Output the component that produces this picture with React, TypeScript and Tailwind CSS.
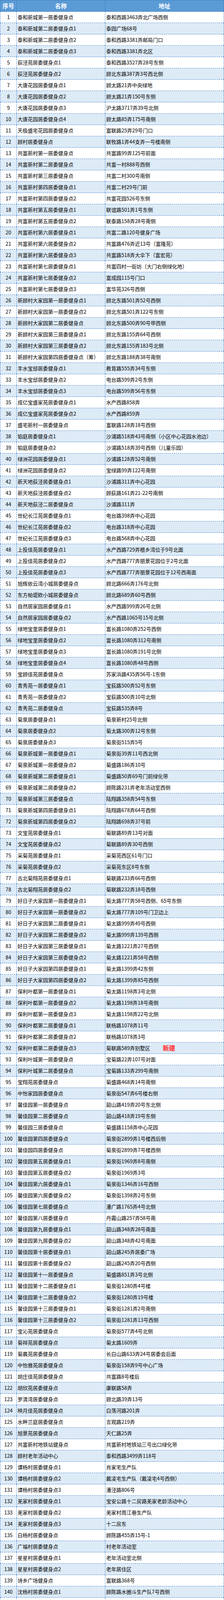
import React from "react";

type Row = [string, string, string];

const raw = `1|泰和新城第一居委健身点|泰和西路3463弄北广场西侧
2|泰和新城第二居委健身点1|泰园广场68号
3|泰和新城第二居委健身点2|泰和西路3381弄邮局门口
4|泰和新城第二居委健身点3|泰和西路3381弄北区
5|荻泾苑居委健身点1|泰和西路3527弄28号东侧
6|荻泾苑居委健身点2|顾北东路387弄3号西北侧
7|大唐花园居委健身点1|顾太路21弄中央绿地
8|大唐花园居委健身点2|顾太路21弄150号东侧
9|大唐花园居委健身点3|沪太路3717弄39号北侧
10|大唐花园居委健身点4|顾太路85弄175号南侧
11|天极盛宅花园居委健身点|富联路25弄29号门口
12|顾村居委健身点|联牧路1弄44支弄一号楼南侧
13|共富新村第一居委健身点|共富路99弄125号前面
14|共富新村第二居委健身点|共富一村888号西侧
15|共富新村第三居委健身点|共富二村300号南侧
16|共富新村第四居委健身点1|共富二村29号门前
17|共富新村第四居委健身点2|共富花园526号东侧
18|共富新村第五居委健身点1|联谊路501弄1号东侧
19|共富新村第五居委健身点2|联泰路158弄28号南侧
20|共富新村第六居委健身点1|共富二路120号健身广场
21|共富新村第六居委健身点2|共富路476弄近13号（富隆苑）
22|共富新村第六居委健身点3|共富路518弄大伞下（富宏苑）
23|共富新村第七居委健身点1|共富四村一街坊（大门右侧绿化地）
24|共富新村第七居委健身点2|富成园115号门口
25|共富新村第七居委健身点3|富华苑326号西侧
26|新顾村大家园第一居委健身点1|顾北东路501弄52号西侧
27|新顾村大家园第一居委健身点2|顾北东路501弄122号东侧
28|新顾村大家园第二居委健身点|顾北东路500弄90号甲西侧
29|新顾村大家园第三居委健身点1|顾北东路155弄64号西侧
30|新顾村大家园第三居委健身点2|顾北东路155弄183号北侧
31|新顾村大家园第四居委健身点（筹）|顾北东路188弄38号南侧
32|丰水宝邸居委健身点1|教育路555弄34号东侧
33|丰水宝邸居委健身点2|电台路599弄2号东侧
34|丰水宝邸居委健身点3|电台路599弄56号东侧
35|成亿宝盛家苑居委健身点1|水产西路858弄
36|成亿宝盛家苑居委健身点2|水产西路859弄
37|盛宅新村一居委健身点|富联路128弄18号西侧
38|铂庭居委健身点1|沙浦路518弄43号南侧（小区中心花园水池边）
39|铂庭居委健身点2|沙浦路518弄39号西侧（儿童乐园）
40|绿洲花园居委健身点1|沙浦路128弄52号南侧
41|绿洲花园居委健身点2|宝绿路99弄122号南侧
42|新天地荻泾居委健身点1|沙浦路311弄中心花园
43|新天地荻泾居委健身点2|顾荻路161弄21-22号南侧
44|新天地荻泾二居委健身点|沙浦路311弄
45|世纪长江苑居委健身点1|电台路398弄中心花园
46|世纪长江苑居委健身点2|电台路318弄中心花园
47|世纪长江苑居委健身点3|电台路568弄中心花园
48|上投佳苑居委健身点1|水产西路729弄檀乡湾位于9号北面
49|上投佳苑居委健身点2|水产西路777弄丽景花园位于2号北面
50|上投佳苑居委健身点3|水产西路777弄丽景花园位于12号西南面
51|旭辉依云湾小城居委健身点|顾北路666弄176号北侧
52|东方帕堤欧小城居委健身点|顾北路689弄60号西侧
53|自然居家园居委健身点1|水产西路999弄26号北侧
54|自然居家园居委健身点2|水产西路1065号15号北侧
55|绿地宝里居委健身点1|富长路1080弄252号西侧
56|绿地宝里居委健身点2|富长路1080弄312号南侧
57|绿地宝里居委健身点3|富长路1080弄191号北侧
58|绿地宝里居委健身点4|富长路1080弄48号西侧
59|宝顾佳苑居委健身点|苏家浜路435弄56号-1东侧
60|青秀苑一居委健身点1|宝荻路500弄52号东侧
61|青秀苑一居委健身点2|宝荻路500弄10号北侧
62|青秀苑二居委健身点|宝荻路535弄8号
63|菊泉居委健身点1|菊泉新村25号北侧
64|菊泉居委健身点2|菊太路300弄12号东侧
65|菊泉居委健身点3|菊泉街515弄5号
66|菊泉新城第一居委健身点1|菊泉街39弄11号西北侧
67|菊泉新城第一居委健身点2|菊盛路186弄10号
68|菊泉新城第二居委健身点1|菊盛路50弄69号门前绿化带
69|菊泉新城第二居委健身点2|顾陈路231弄老年活动室西侧
70|菊泉新城第三居委健身点|陆翔路358弄54号东侧
71|菊泉新城第四居委健身点1|陆翔路678弄64号西侧
72|菊泉新城第四居委健身点2|陆翔路698弄37号前
73|文宝苑居委健身点1|菊联路89弄13号对面
74|文宝苑居委健身点2|菊联路89弄30号西侧
75|采菊苑居委健身点1|采菊苑西区61号门口
76|采菊苑居委健身点2|采菊苑东区8号东侧
77|古北菊翔苑居委健身点1|菊联路233弄66号西侧
78|古北菊翔苑居委健身点2|菊联路232弄18号西侧
79|好日子大家园第一居委健身点1|菊太路777弄58号西侧、65号东侧
80|好日子大家园第一居委健身点2|菊太路777弄109号门卫边上
81|好日子大家园第二居委健身点1|菊太路999弄49号西侧
82|好日子大家园第二居委健身点2|菊太路999弄139号西侧
83|好日子大家园第三居委健身点1|菊太路1221弄27号西侧
84|好日子大家园第三居委健身点2|菊太路1221弄58号西侧
85|好日子大家园第四居委健身点1|菊太路1399弄42东侧
86|好日子大家园第四居委健身点2|菊太路1399弄85号西侧
87|保利叶都第一居委健身点1|菊太路1198弄3号北侧
88|保利叶都第一居委健身点2|菊太路1198弄18号南侧
89|保利叶都第一居委健身点3|菊太路1198弄22号北侧
90|保利叶都第二居委健身点1|联杨路1078弄11号
91|保利叶都第二居委健身点2|联杨路1078弄3号
92|保利叶都第二居委健身点3|菊联路589弄别墅区
93|保利叶城第一居委健身点|宝菊路22弄107号对面
94|保利叶城第二居委健身点|宝菊路133弄299号南侧
95|宝翔苑居委健身点|菊盛路468弄14号南侧
96|中怡家园居委健身点|菊泉街547弄6号楼右侧
97|馨佳园第一居委健身点|韶山路419弄20号东北侧
98|馨佳园第二居委健身点|韶山路418弄19号东侧
99|馨佳园三居委健身点|菊盛路1158弄中心花园
100|馨佳园第四居委健身点|菊泉街2899弄1号楼西后侧
101|馨佳园四居委健身点|菊泉街2899弄7号楼西侧
102|馨佳园第五居委健身点1|菊泉街1969弄8号南侧
103|馨佳园第五居委健身点2|菊泉街1969弄3号
104|馨佳园第六居委健身点1|菊泉街1346弄16号西侧
105|馨佳园第六居委健身点2|菊泉街1398弄2号东侧
106|馨佳园第七居委健身点|潘广路1765弄4号北侧
107|馨佳园第八居委健身点|丹霞山路257弄58号南
108|馨佳园第九居委健身点1|韶山路348弄28号南面
109|馨佳园第九居委健身点2|韶山路348弄42号南面
110|馨佳园第十居委健身点1|韶山路245弄居委广场
111|馨佳园第十居委健身点2|韶山路245弄20号西侧
112|馨佳园第十一居委健身点|菊盛路851弄3号北侧
113|馨佳园第十二居委健身点1|菊泉街1280弄4号楼
114|馨佳园第十二居委健身点2|菊泉街1280弄19号楼
115|馨佳园第十三居委健身点1|菊泉街1281弄2号南侧
116|馨佳园第十三居委健身点2|菊泉街1281弄13号西侧
117|宝沁苑居委健身点|菊泉街577弄4号北侧
118|菊祥苑居委健身点|菊太路1609弄
119|菊晨苑居委健身点|长白山路633弄24号居委会后面
120|中怡雅苑居委健身点|菊泉街158弄9号中心广场
121|胡庄佳苑居委健身点|共富路8号楼后
122|胡欣苑居委健身点|康联路58弄
123|罗清湾居委健身点|顾北路39弄13号
124|映月佳苑居委健身点|白荡河路201弄
125|水畔兰庭居委健身点|言观路219弄
126|旭景苑居委健身点|天仁路25弄
127|共富新村地铁站健身点|共富新村地铁站三号出口绿化带
128|顾村老年活动中心|泰和西路3499弄118号
129|谭杨村居委健身点1|肖家宅生产队
130|谭杨村居委健身点2|戴凌宅生产队（戴凌宅4号西侧）
131|谭杨村居委健身点3|潘泾路806号
132|羌家村居委健身点1|宝安公路十二房路羌家老龄活动中心
133|羌家村居委健身点2|羌家村周江巷生产队
134|羌家村居委健身点3|十二房东
135|白杨村居委健身点|顾陈路455弄15号-1
136|广福村居委健身点|村老年活动室
137|星星村居委健身点1|老年活动室北侧
138|星星村居委健身点2|老年居住区
139|诗乡广场健身点|富联路368号
140|沈杨村居委健身点1|顾陈路水圈斗生产队7号西侧
141|沈杨村居委健身点2|顾陈路张家宅生产队2、21号东侧，25号西侧
142|沈杨村居委健身点3|顾陈路715号（沈杨村文化中心健身广场）
143|老安村居委健身点1|陈东
144|老安村居委健身点2|陈西
145|老安村居委健身点3|陈南
146|老安村居委健身点4|陈北
147|朱家弄村居委健身点|沪太路佳龙路200号
148|陈行村居委健身点|大沙宅
150|采菊苑小区外健身点|菊太路宝山3路终点站后面
151|宝菊绿地健身点|菊联路宝菊路口东北角
152|富长路绿地健身点|富长路西侧外环线南侧
153|外环16-1标绿地健身点|外环线北侧富联路西侧
154|外环绿道样板段健身点|外环线南侧蕴川路西侧
155|韶山路潘广路东北角绿地健身点|韶山路潘广路东北角
156|菊华苑居委健身点|菊太路1755弄8-3号
157|博成苑居委健身点|宝正路57弄
158|馨雅佳苑居委健身点|宝正路325弄
159|沈宅村居委健身点|北陆宅
160|顾盛佳苑居委健身点|共宝路99弄
161|中企珺庭居委健身点|宝正路108弄`;

const rows: Row[] = raw
  .trim()
  .split("\n")
  .map((l) => l.trim().split("|") as Row);

const badges: Record<string, string> = {
  "92": "left-[417px] top-[-1px]",
  "157": "left-[363px] top-[-1px]",
  "158": "left-[387px] top-[-3px]",
  "159": "left-[396px] top-[-4px]",
  "160": "left-[413px] top-[-4px]",
  "161": "left-[400px] top-[-3px]",
};

function Badge({ pos }: { pos: string }) {
  return (
    <div
      className={`absolute h-[28px] leading-[28px] text-[16px] font-bold text-[#ff3b3b] [text-shadow:0_0_1px_#ff7a7a] ${pos}`}
    >
      新建
    </div>
  );
}

export default function App() {
  return (
    <div className="w-[574px] bg-white text-black font-['Microsoft_YaHei','Noto_Sans_CJK_SC',sans-serif]">
      <div className="grid grid-cols-[43px_227px_304px] h-[30px] overflow-hidden bg-[#5b9bd5] border-t border-b border-dashed border-[#2f6fb0] text-white font-bold text-[15px] leading-[28px]">
        <div className="text-center border-l border-r border-dashed border-[#2f6fb0]">序号</div>
        <div className="text-center border-r border-dashed border-[#2f6fb0]">名称</div>
        <div className="text-center border-r border-dashed border-[#2f6fb0]">地址</div>
      </div>
      {rows.map(([n, name, addr], i) => (
        <div
          key={n}
          className={
            i % 2 === 1
              ? "relative grid grid-cols-[43px_227px_304px] h-[29px] border-b border-dashed border-[#3a7cc4] text-[13px] leading-[28px] bg-[#ddebf7]"
              : "relative grid grid-cols-[43px_227px_304px] h-[29px] border-b border-dashed border-[#3a7cc4] text-[13px] leading-[28px] bg-white"
          }
        >
          <div className="h-[28px] text-center border-l border-r border-dashed border-[#3a7cc4]">{n}</div>
          <div className="h-[28px] pl-[2px] border-r border-dashed border-[#3a7cc4] whitespace-nowrap overflow-hidden">{name}</div>
          <div className="h-[28px] pl-[2px] border-r border-dashed border-[#3a7cc4] whitespace-nowrap overflow-hidden">{addr}</div>
          {badges[n] && <Badge pos={badges[n]} />}
        </div>
      ))}
    </div>
  );
}
